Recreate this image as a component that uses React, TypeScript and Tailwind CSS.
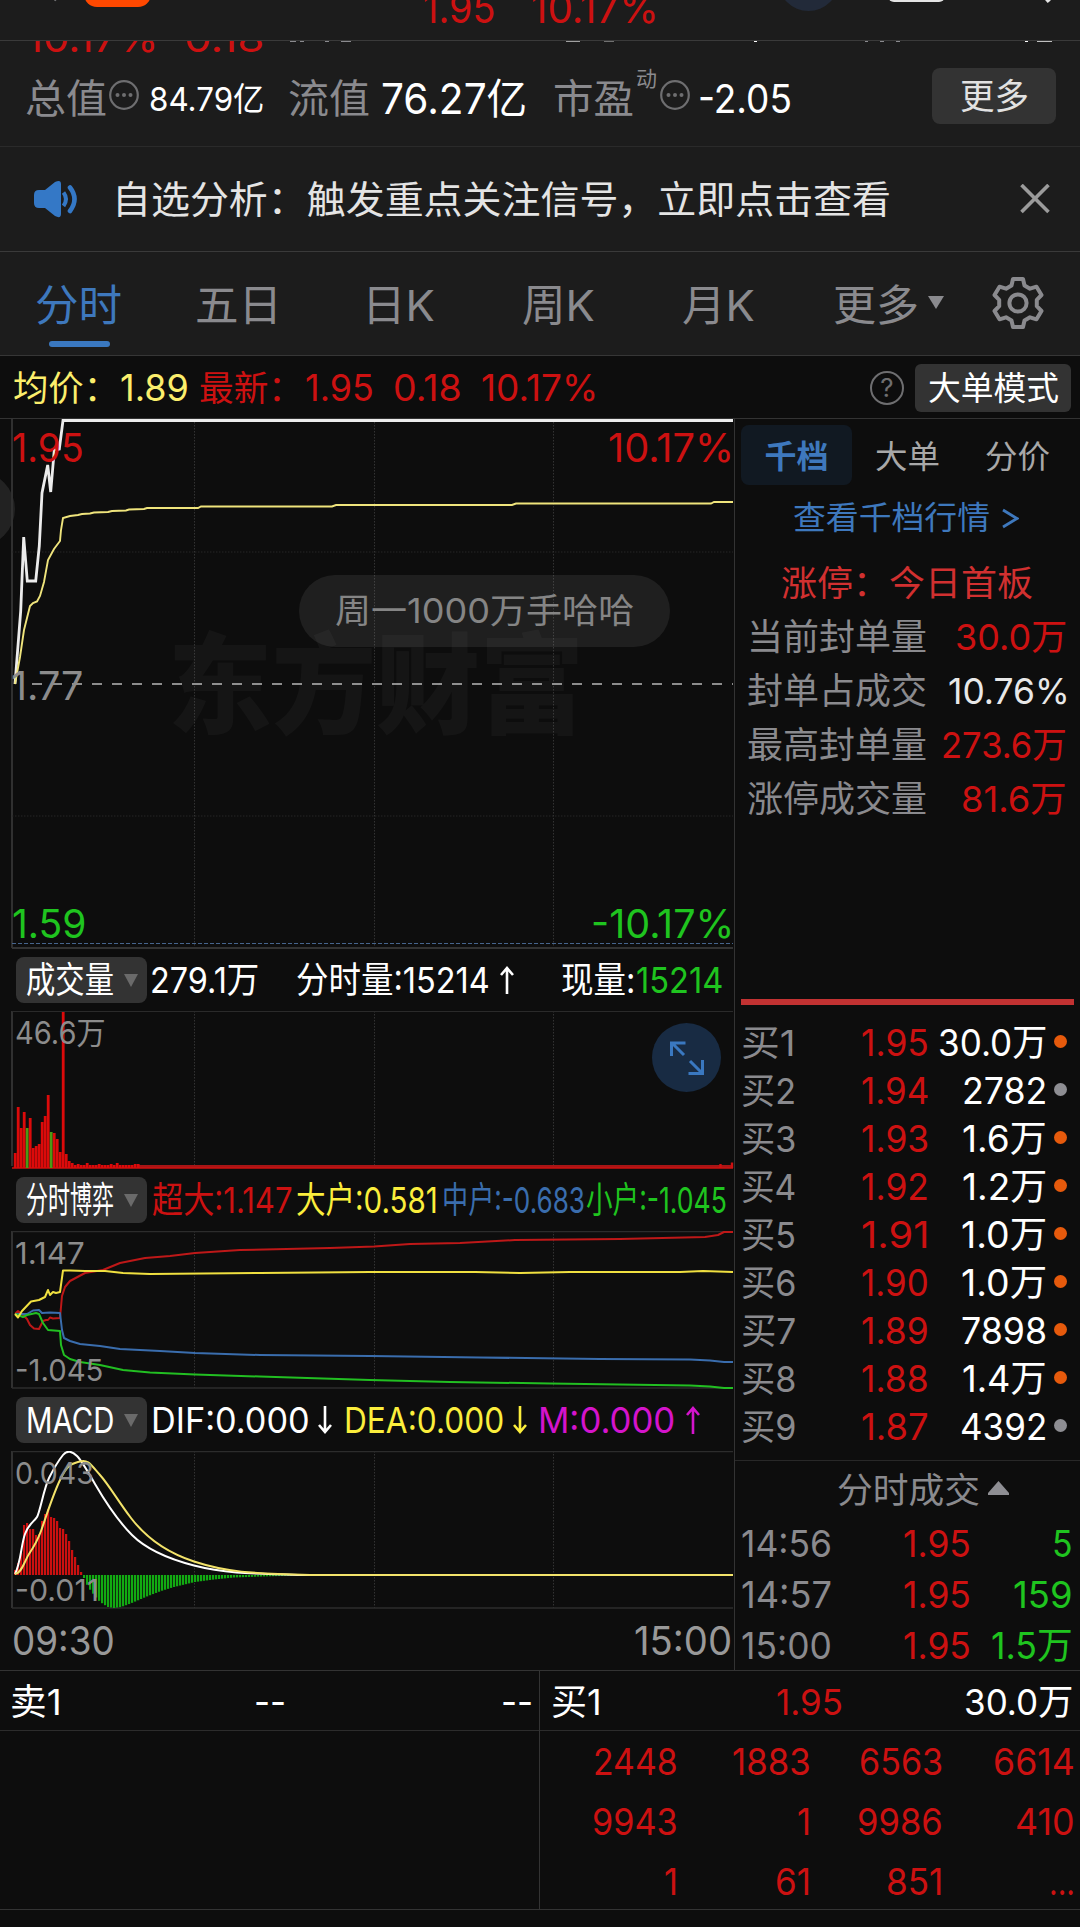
import { useLayoutEffect, useRef, type ReactNode } from 'react';
import clsx from 'clsx';

// Squeezes or stretches one line of text to the width of its box
const Fit = ({ className, children }: { className?: string; children: ReactNode }) => {
  const box = useRef<HTMLSpanElement>(null);
  const text = useRef<HTMLSpanElement>(null);

  useLayoutEffect(() => {
    if (!box.current || !text.current) return;
    const ratio = box.current.clientWidth / text.current.offsetWidth;
    text.current.style.transform = `scaleX(${ratio})`;
  }, [children]);

  return (
    <span ref={box} className={clsx('block shrink-0 whitespace-nowrap', className)}>
      <span ref={text} className="inline-block origin-left whitespace-pre">
        {children}
      </span>
    </span>
  );
};

const InfoDots = () => (
  <svg width="30" height="30" viewBox="0 0 30 30" className="shrink-0" fill="#6e6e70">
    <circle cx="15" cy="15" r="13.8" fill="none" stroke="#6e6e70" strokeWidth="2.2" />
    <circle cx="8.5" cy="15" r="2" />
    <circle cx="15" cy="15" r="2" />
    <circle cx="21.5" cy="15" r="2" />
  </svg>
);

const Header = () => (
  <header className="relative h-[41px] overflow-hidden border-b border-[#3a3a3a]">
    <div className="absolute -top-1 left-[53px] h-[5px] w-[3px] rotate-[-45deg] bg-[#77777a]" />
    <div className="absolute -top-8 left-[84px] h-[39px] w-[67px] rounded-[13px] bg-[#ff4800]" />
    <div className="absolute -top-[17px] left-[423px] flex text-[41px] leading-[50px] text-[#cc1111]">
      <Fit className="w-[73px]">1.95</Fit>
      <Fit className="ml-[35px] w-[128px]">10.17%</Fit>
    </div>
    <div className="absolute -top-[50px] left-[778px] size-[61px] rounded-full bg-[#222a39]" />
    <div className="absolute -top-5 left-[888px] h-[22px] w-[57px] rounded-md bg-[#e4e4e4]" />
    <div className="absolute -top-[7px] left-[1044px] h-[10px] w-[4px] rotate-[-40deg] bg-[#e4e4e4]" />
  </header>
);

const Summary = () => (
  <section className="relative flex h-[106px] items-start overflow-hidden border-b border-[#2a2a2a] pl-[25px] text-white">
    <div className="absolute -top-[28px] left-[26px] flex text-[39px] leading-[50px] text-[#cc1111]">
      <Fit className="w-[133px]">10.17%</Fit>
      <Fit className="ml-[25px] w-[80px]">0.18</Fit>
    </div>
    <div className="absolute left-[290px] top-0 flex h-px">
      <i className="w-[6px] bg-[#8a8a8e]" />
      <i className="ml-1 w-[4px] bg-[#8a8a8e]" />
      <i className="ml-[21px] w-[4px] bg-[#8a8a8e]" />
      <i className="ml-[12px] w-[10px] bg-[#8a8a8e]" />
      <i className="ml-[215px] w-[14px] bg-[#a0a0a0]" />
      <i className="ml-[24px] w-[10px] bg-[#707070]" />
      <i className="ml-[140px] w-[3px] bg-white" />
      <i className="ml-[108px] w-[3px] bg-[#8a8a8e]" />
      <i className="ml-[12px] w-[4px] bg-[#8a8a8e]" />
      <i className="ml-[12px] w-[4px] bg-[#8a8a8e]" />
      <i className="ml-[125px] w-[3px] bg-white" />
      <i className="ml-[9px] w-[15px] bg-[#c0c0c0]" />
    </div>
    <Fit className="mt-[33px] w-[82px] text-[40px] leading-[50px] text-[#8a8a8e]">总值</Fit>
    <div className="ml-[2px] mt-[39px]">
      <InfoDots />
    </div>
    <Fit className="ml-[10px] mt-[33px] w-[115px] text-[33px] leading-[50px]">84.79亿</Fit>
    <Fit className="ml-[24px] mt-[33px] w-[82px] text-[40px] leading-[50px] text-[#8a8a8e]">流值</Fit>
    <Fit className="ml-[11px] mt-[33px] w-[146px] text-[42px] leading-[50px]">76.27亿</Fit>
    <Fit className="ml-[26px] mt-[33px] w-[81px] text-[40px] leading-[50px] text-[#8a8a8e]">市盈</Fit>
    <Fit className="ml-[2px] mt-[25px] w-[21px] text-[21px] leading-[26px] text-[#8a8a8e]">动</Fit>
    <div className="ml-[3px] mt-[39px]">
      <InfoDots />
    </div>
    <Fit className="ml-[8px] mt-[33px] w-[94px] text-[39px] leading-[50px]">-2.05</Fit>
    <button className="ml-[140px] mt-[27px] flex h-[56px] w-[124px] items-center justify-center rounded-lg bg-[#333333] text-[#e2e2e2]">
      <Fit className="w-[69px] text-[35px] leading-[50px]">更多</Fit>
    </button>
  </section>
);

const Notice = () => (
  <section className="flex h-[105px] items-center border-b border-[#3a3a3a] pl-[34px] text-[#e4e4e4]">
    <svg width="45" height="38" viewBox="0 0 45 38" fill="#3478c6">
      <path d="M0 15 Q0 10 5 10 H11 L21 2 Q27 -1 27 4 V34 Q27 39 21 36 L11 28 H5 Q0 28 0 23 Z" />
      <path d="M29.5 12.5 Q34.5 19 29.5 26" fill="none" stroke="#3478c6" strokeWidth="4" />
      <path d="M36 7.5 Q45 19 36 31" fill="none" stroke="#3478c6" strokeWidth="4.6" strokeLinecap="round" />
    </svg>
    <Fit className="ml-[33px] w-[779px] text-[38px] leading-[50px]">
      自选分析：触发重点关注信号，立即点击查看
    </Fit>
    <svg width="30" height="30" viewBox="0 0 30 30" className="ml-[129px]" stroke="#9b9b9b" strokeWidth="3.6">
      <path d="M1.5 1 L28.5 28 M28.5 1 L1.5 28" />
    </svg>
  </section>
);

const Gear = () => (
  <svg width="52" height="54" viewBox="0 0 52 54" fill="none" stroke="#8a8a8e" strokeWidth="4" strokeLinejoin="round">
    <path d="M21 3 H31 L32.5 9.5 L38 12.7 L44.5 10.7 L49.5 19 L44.8 23.8 V30.2 L49.5 35 L44.5 43.3 L38 41.3 L32.5 44.5 L31 51 H21 L19.5 44.5 L14 41.3 L7.5 43.3 L2.5 35 L7.2 30.2 V23.8 L2.5 19 L7.5 10.7 L14 12.7 L19.5 9.5 Z" />
    <circle cx="26" cy="27" r="8.6" />
  </svg>
);

const PeriodTabs = () => (
  <nav className="flex h-[104px] items-center border-b border-[#363636] pl-[35px] pt-[2px] text-[43px] leading-[60px] text-[#8a8a8e]">
    <div className="relative text-[#3e78bd]">
      <Fit className="w-[87px]">分时</Fit>
      <div className="absolute -bottom-[12px] left-[14px] h-[6px] w-[61px] rounded-full bg-[#3a78c0]" />
    </div>
    <Fit className="ml-[73px] w-[87px]">五日</Fit>
    <Fit className="ml-[80px] w-[73px]">日K</Fit>
    <Fit className="ml-[87px] w-[73px]">周K</Fit>
    <Fit className="ml-[87px] w-[73px]">月K</Fit>
    <Fit className="ml-[78px] w-[86px]">更多</Fit>
    <svg width="16" height="14" viewBox="0 0 16 14" className="-mt-1 ml-[9px]" fill="#8a8a8e">
      <path d="M0 0 H16 L8 13 Z" />
    </svg>
    <div className="-mt-[3px] ml-[48px]">
      <Gear />
    </div>
  </nav>
);

const PriceBar = () => (
  <section className="flex h-[63px] items-center border-b border-[#333333] pl-[13px] pt-[2px] text-[37px] leading-[50px] text-[#cc1111]">
    <Fit className="w-[106px] text-[35px] text-[#fbee6c]">均价：</Fit>
    <Fit className="ml-[1px] w-[69px] text-[#fbee6c]">1.89</Fit>
    <Fit className="ml-[10px] w-[104px] text-[35px]">最新：</Fit>
    <Fit className="ml-[2px] w-[69px]">1.95</Fit>
    <Fit className="ml-[19px] w-[69px]">0.18</Fit>
    <Fit className="ml-[19px] w-[117px]">10.17%</Fit>
    <div className="ml-[272px] flex size-[34px] items-center justify-center rounded-full border-[2.5px] border-[#6e6e70] text-[26px] leading-none text-[#6e6e70]">
      ?
    </div>
    <button className="ml-[11px] flex h-[48px] w-[156px] items-center justify-center rounded-md bg-[#333333] text-white">
      <Fit className="w-[131px] text-[33px]">大单模式</Fit>
    </button>
  </section>
);

const GridLines = ({ top, bottom }: { top: number; bottom: number }) => (
  <>
    {[194.5, 374.5, 553.5].map((x) => (
      <path key={x} d={`M${x} ${top} V${bottom}`} stroke="#333333" strokeDasharray="1.5 1.5" />
    ))}
    <path d={`M12 ${top} V${bottom}`} stroke="#303030" strokeWidth="2" />
  </>
);

const PRICE =
  '15,684 20.7,611 23.7,537 27.3,581 35.7,581 39.3,546 42,493 47.7,465 50.7,492 54.3,450 59.3,449 63,420.5 733,420.5';
const AVERAGE =
  '15,684 20,657 24,630 30,606 33,603 37,601.5 40,596 44,582 48,560 54,549 60,541 61,530 63,518 70,516 78,515 82,514 90,513.5 94,512.5 108,512 112,511 126,510.5 129,509.5 144,509 147,508 198,508 201,506.5 332,506.5 336,505 512,505 516,503.5 711,503.5 714,502 733,502';

const PriceChart = () => (
  <div className="relative h-[530px] overflow-hidden">
    <svg width="735" height="530" viewBox="0 419 735 530" className="block" fill="none">
      <circle cx="-22.5" cy="509" r="37.5" fill="#222222" />
      <GridLines top={419} bottom={948} />
      <path d="M12 552 H733 M12 816 H733" stroke="#272727" strokeDasharray="1.5 1.5" />
      <path d="M32 684 H733" stroke="#8c8c8c" strokeWidth="2" strokeDasharray="10 10" />
      <path d="M12 943.5 H733" stroke="#46648c" strokeDasharray="4 2" />
      <path d="M12 948 H733" stroke="#333333" strokeWidth="2" />
      <polyline points={PRICE} stroke="#ececec" strokeWidth="2.8" />
      <polyline points={AVERAGE} stroke="#efe47c" strokeWidth="1.9" />
    </svg>
    <div className="absolute left-[168px] top-[198px] text-[109px] font-black leading-[136px] text-white/[0.035]">
      <Fit className="w-[416px]">东方财富</Fit>
    </div>
    <div className="absolute left-[299px] top-[156px] flex h-[72px] w-[371px] items-center justify-center rounded-full bg-white/[0.075] text-[#858585]">
      <Fit className="w-[299px] text-[34px] leading-[50px]">周一1000万手哈哈</Fit>
    </div>
    <div className="text-[39.5px] leading-[50px]">
      <Fit className="absolute left-[12px] top-[4px] w-[72px] text-[#cc1111]">1.95</Fit>
      <Fit className="absolute left-[608px] top-[4px] w-[126px] text-[#cc1111]">10.17%</Fit>
      <Fit className="absolute left-[11px] top-[242px] w-[72px] text-[#8c8c8c]">1.77</Fit>
      <Fit className="absolute left-[12px] top-[480px] w-[74px] text-[#1fc41f]">1.59</Fit>
      <Fit className="absolute left-[591px] top-[480px] w-[143px] text-[#1fc41f]">-10.17%</Fit>
    </div>
  </div>
);

const IndicatorButton = ({ label }: { label: string }) => (
  <button className="flex h-[46px] w-[131px] shrink-0 items-center rounded-lg bg-[#333333] pl-[10px] text-white">
    <Fit className="w-[88px]">{label}</Fit>
    <svg width="14" height="13" viewBox="0 0 14 13" className="ml-[10px]" fill="#6a6a6a">
      <path d="M0 0 H14 L7 13 Z" />
    </svg>
  </button>
);

const IndicatorRow = ({ label, children }: { label: string; children: ReactNode }) => (
  <div className="flex h-[62px] items-center pl-[16px] text-[36px] leading-[46px] text-white">
    <IndicatorButton label={label} />
    {children}
  </div>
);

const Arrow = ({ up, className }: { up?: boolean; className?: string }) => (
  <svg width="16" height="28" viewBox="0 0 16 28" className={className} fill="none" stroke="currentColor" strokeWidth="2.6">
    <path d={up ? 'M8 28 V2 M2 9 L8 2 L14 9' : 'M8 0 V26 M2 19 L8 26 L14 19'} />
  </svg>
);

const VOLUME = [15, 61, 40, 56, 40, 50, 20, 22, 24, 46, 52, 73, 36, 35, 29, 16, 156, 14, 7, 5, 3, 4, 3, 3, 5, 3, 3, 3, 4, 3, 3, 3, 4, 3, 5, 3, 3, 3, 3, 3, 4, 4];
const VOLUME_DOWN = [4, 12];

const VolumeChart = () => (
  <div className="relative h-[158px]">
    <svg width="735" height="158" viewBox="0 1011 735 158" className="block" fill="none">
      <GridLines top={1011} bottom={1166} />
      <path d="M12 1011.5 H733" stroke="#2a2a2a" />
      <path d="M139 1166.5 H733" stroke="#a81515" strokeWidth="3" />
      <path d="M12 1168 H733" stroke="#cc1111" strokeWidth="1.5" />
      {VOLUME.map((v, i) => (
        <rect
          key={i}
          x={13.8 + i * 3}
          y={1168 - v}
          width="2.8"
          height={v}
          fill={VOLUME_DOWN.includes(i) ? '#4c9a14' : '#dc0a0a'}
        />
      ))}
      <path d="M720.5 1164 V1168 M732 1162.5 V1168" stroke="#cc1111" strokeWidth="2.4" />
    </svg>
    <Fit className="absolute left-[15px] top-0 w-[91px] text-[31px] leading-[44px] text-[#8c8c8c]">46.6万</Fit>
    <div className="absolute left-[652px] top-[12px] flex size-[69px] items-center justify-center rounded-full bg-[#182b43]">
      <svg width="34" height="34" viewBox="0 0 34 34" fill="none" stroke="#3a78c0" strokeWidth="3">
        <path d="M1.5 15 V2 H15.5 M2 2 L14 14" />
        <path d="M32.5 19 V32.5 H18.5 M32 32 L20 20" />
      </svg>
    </div>
  </div>
);

const GAME_LINES = [
  {
    color: '#be1818',
    points:
      '15,1314 18,1311 22,1314 27,1319 30,1325 34,1328.5 39,1329 43,1321 46,1320 48,1320 50,1317.5 53,1318.5 60,1318 62,1296 65,1287 70,1281 85,1273 103,1270 120,1263 145,1258 170,1256 195,1253 240,1250 330,1248 374,1246.5 410,1244 460,1243 515,1240 620,1239 705,1237 718,1235 724,1232 733,1232',
  },
  {
    color: '#3a6dad',
    points:
      '15,1314 27,1314 33,1310.5 39,1310 42,1313 50,1312.5 60,1313 62,1330 64,1338 70,1341 80,1344 100,1346 120,1349 160,1351 195,1353 260,1355 370,1356 480,1357.5 600,1359 690,1359.5 710,1360.5 724,1362 733,1362',
  },
  {
    color: '#22bf22',
    points:
      '15,1314 18,1315 23,1317 27,1315 36,1313 39,1314 43,1323 48,1330 60,1331 61,1345 64,1355 70,1359 80,1362 100,1365 123,1370 150,1372.5 195,1374.5 260,1376.5 370,1380 450,1382 550,1383.5 690,1385.5 710,1386.5 724,1388 733,1388',
  },
  {
    color: '#f0e040',
    points:
      '15,1314 18,1317.5 22,1311 31,1301.5 39,1300 45,1297 48,1290 50,1295 53,1292 56,1293 60,1292 63,1270.5 70,1270.5 85,1271 105,1271 123,1273 150,1274 260,1273 370,1272 475,1272 520,1273 570,1272 680,1272 703,1271 733,1272',
  },
];

const GameChart = () => (
  <div className="relative h-[158px]">
    <svg width="735" height="158" viewBox="0 1231 735 158" className="block" fill="none">
      <GridLines top={1231} bottom={1388} />
      <path d="M12 1231.5 H733 M12 1388 H733" stroke="#2c2c2c" strokeWidth="1.5" />
      {GAME_LINES.map((line) => (
        <polyline key={line.color} points={line.points} stroke={line.color} strokeWidth="2" strokeLinejoin="round" />
      ))}
    </svg>
    <div className="text-[30px] leading-[40px] text-[#8c8c8c]">
      <Fit className="absolute left-[15px] top-[2px] w-[70px]">1.147</Fit>
      <Fit className="absolute left-[15px] top-[119px] w-[88px]">-1.045</Fit>
    </div>
  </div>
);

const MACD_UP = [5, 12, 22, 50, 52, 46, 46, 40, 41, 54, 61, 66, 58, 57, 54, 47, 46, 41, 34, 25, 18, 10, 3];
// x / depth pairs of the lower histogram's outline
const MACD_DOWN = [
  [83, 3], [87, 12], [93, 20], [97, 25], [102, 29], [107, 32], [113, 33], [120, 32], [127, 29.5], [133, 27],
  [147, 21], [160, 16], [173, 12], [194, 7], [213, 4.5], [233, 2.5], [260, 1.5], [300, 0.5],
];

const depthAt = (x: number) => {
  const k = MACD_DOWN.findIndex(([px]) => px >= x);
  if (k < 1) return MACD_DOWN[0][1];
  const [x0, y0] = MACD_DOWN[k - 1];
  const [x1, y1] = MACD_DOWN[k];
  return y0 + ((y1 - y0) * (x - x0)) / (x1 - x0);
};

const MacdChart = () => (
  <div className="relative h-[158px]">
    <svg width="735" height="158" viewBox="0 1451 735 158" className="block" fill="none">
      <GridLines top={1451} bottom={1608} />
      <path d="M12 1451.5 H733 M12 1608 H733" stroke="#2c2c2c" strokeWidth="1.5" />
      {MACD_UP.map((v, i) => (
        <rect key={i} x={14 + i * 3} y={1575 - v} width="2.2" height={v} fill="#cc1010" />
      ))}
      {Array.from({ length: 70 }, (_, i) => 83 + i * 3).map((x) => (
        <rect key={x} x={x} y="1575" width="2.2" height={depthAt(x)} fill="#12aa12" />
      ))}
      <path
        d="M15 1574 C21 1562 21 1545 25 1534 S34 1522 37 1517 S44 1488 49 1478 S59 1460 63 1455 S72 1451 77 1456 S88 1472 95 1484 S118 1521 132 1535 S165 1558 194 1565.5 S245 1573.5 300 1575 H733"
        stroke="#ffffff"
        strokeWidth="2"
      />
      <path
        d="M15 1574 C22 1573 25 1560 29 1554 S37 1542 41 1531 S52 1497 60 1480 S72 1464 80 1461.5 S91 1465 100 1475 S118 1501 131 1518 S162 1551 194 1561.5 S250 1573.5 310 1575 H733"
        stroke="#f3e36a"
        strokeWidth="2"
      />
    </svg>
    <div className="text-[30px] leading-[40px] text-[#8c8c8c]">
      <Fit className="absolute left-[15px] top-[2px] w-[79px]">0.043</Fit>
      <Fit className="absolute left-[15px] top-[119px] w-[84px]">-0.011</Fit>
    </div>
  </div>
);

const Charts = () => (
  <div className="w-[735px] shrink-0 border-r border-[#333333]">
    <PriceChart />
    <IndicatorRow label="成交量">
      <Fit className="ml-[3px] w-[109px]">279.1万</Fit>
      <Fit className="ml-[37px] w-[194px]">分时量:15214</Fit>
      <Arrow up className="ml-[9px]" />
      <Fit className="ml-[46px] w-[74px]">现量:</Fit>
      <Fit className="ml-px w-[87px] text-[#1fc41f]">15214</Fit>
    </IndicatorRow>
    <VolumeChart />
    <IndicatorRow label="分时博弈">
      <Fit className="ml-[5px] w-[141px] text-[#cc1111]">超大:1.147</Fit>
      <Fit className="ml-[3px] w-[142px] text-[#fbee3c]">大户:0.581</Fit>
      <Fit className="ml-[4px] w-[143px] text-[#3a6dad]">中户:-0.683</Fit>
      <Fit className="ml-px w-[141px] text-[#1fc41f]">小户:-1.045</Fit>
    </IndicatorRow>
    <GameChart />
    <IndicatorRow label="MACD">
      <Fit className="ml-[4px] w-[159px]">DIF:0.000</Fit>
      <Arrow className="ml-[7px]" />
      <Fit className="ml-[11px] w-[160px] text-[#fbee3c]">DEA:0.000</Fit>
      <Arrow className="ml-[8px] text-[#fbee3c]" />
      <Fit className="ml-[10px] w-[137px] text-[#d414cc]">M:0.000</Fit>
      <Arrow up className="ml-[10px] text-[#d414cc]" />
    </IndicatorRow>
    <MacdChart />
    <div className="flex justify-between pl-[12px] pr-[2px] pt-[7px] text-[39px] leading-[50px] text-[#999999]">
      <Fit className="w-[103px]">09:30</Fit>
      <Fit className="w-[98px]">15:00</Fit>
    </div>
  </div>
);

const BOARD = [
  { label: '当前封单量', value: '30.0万', width: 'w-[112px]', color: 'text-[#cc1111]' },
  { label: '封单占成交', value: '10.76%', width: 'w-[122px] -mr-[3px]', color: 'text-[#e8e8e8]' },
  { label: '最高封单量', value: '273.6万', width: 'w-[126px]', color: 'text-[#cc1111]' },
  { label: '涨停成交量', value: '81.6万', width: 'w-[106px]', color: 'text-[#cc1111]' },
];

const BIDS = [
  { price: '1.95', volume: '30.0万', width: 'w-[109px]', big: true },
  { price: '1.94', volume: '2782', width: 'w-[85px]', big: false },
  { price: '1.93', volume: '1.6万', width: 'w-[85px]', big: true },
  { price: '1.92', volume: '1.2万', width: 'w-[85px]', big: true },
  { price: '1.91', volume: '1.0万', width: 'w-[86px]', big: true },
  { price: '1.90', volume: '1.0万', width: 'w-[86px]', big: true },
  { price: '1.89', volume: '7898', width: 'w-[86px]', big: true },
  { price: '1.88', volume: '1.4万', width: 'w-[85px]', big: true },
  { price: '1.87', volume: '4392', width: 'w-[87px]', big: false },
];

const TRADES = [
  { time: '14:56', price: '1.95', volume: '5', width: 'w-[21px]' },
  { time: '14:57', price: '1.95', volume: '159', width: 'w-[60px]' },
  { time: '15:00', price: '1.95', volume: '1.5万', width: 'w-[82px]' },
];

const OrderBook = () => (
  <aside className="w-[345px] text-[36px] leading-[48px] text-[#8a8a8e]">
    <div className="ml-[6px] flex h-[66px] items-center pt-[6px] text-[32px] text-[#a8a8a8]">
      <div className="flex h-[60px] w-[111px] items-center justify-center rounded-lg bg-[#111922] pt-[3px] font-bold text-[#3e78bd]">
        <Fit className="w-[64px]">千档</Fit>
      </div>
      <Fit className="ml-[23px] mt-[3px] w-[65px]">大单</Fit>
      <Fit className="ml-[45px] mt-[3px] w-[65px]">分价</Fit>
    </div>
    <div className="ml-[58px] flex pt-[9px] text-[32px] text-[#3e78bd]">
      <Fit className="w-[197px]">查看千档行情</Fit>
      <svg width="17" height="22" viewBox="0 0 17 22" className="ml-[12px] mt-[14px]" fill="none" stroke="#3e78bd" strokeWidth="2.8">
        <path d="M1 2 L15 10.5 L1 19" />
      </svg>
    </div>
    <div className="pl-[46px] pt-[17px]">
      <Fit className="w-[252px] text-[35px] text-[#d13030]">涨停：今日首板</Fit>
    </div>
    <div className="h-[392px] pt-[3px]">
      {BOARD.map((row) => (
        <div key={row.label} className="flex h-[54px] items-center justify-between pl-[12px] pr-[13px]">
          <Fit className="w-[180px]">{row.label}</Fit>
          <Fit className={clsx(row.width, row.color)}>{row.value}</Fit>
        </div>
      ))}
    </div>
    <div className="ml-[6px] h-[6px] w-[333px] bg-[#c23232]" />
    <div className="h-[455px] pt-[14px] text-[37px]">
      {BIDS.map((bid, i) => (
        <div key={bid.price} className="flex h-[48px] items-center pl-[6px]">
          <Fit className="w-[55px] text-[36px]">{`买${i + 1}`}</Fit>
          <Fit className="ml-[65px] w-[68px] text-[#cc1111]">{bid.price}</Fit>
          <div className="flex w-[118px] justify-end text-white">
            <Fit className={bid.width}>{bid.volume}</Fit>
          </div>
          <i className={clsx('-mt-1 ml-[7px] size-[13px] rounded-full', bid.big ? 'bg-[#e65a0c]' : 'bg-[#8e8e93]')} />
        </div>
      ))}
    </div>
    <div className="flex h-[58px] items-center border-t border-[#282828] pl-[102px]">
      <Fit className="w-[143px] text-[35px]">分时成交</Fit>
      <svg width="21" height="14" viewBox="0 0 21 14" className="-mt-1 ml-[8px]" fill="#8e8e93">
        <path d="M10.5 0 L21 12 V14 H0 V12 Z" />
      </svg>
    </div>
    {TRADES.map((trade) => (
      <div key={trade.time} className="flex h-[51px] items-center justify-between pl-[6px] pr-[7px] text-[37px]">
        <Fit className="w-[91px]">{trade.time}</Fit>
        <div className="flex w-[170px] items-center">
          <Fit className="w-[68px] text-[#cc1111]">{trade.price}</Fit>
          <div className="flex grow justify-end text-[#1fc41f]">
            <Fit className={trade.width}>{trade.volume}</Fit>
          </div>
        </div>
      </div>
    ))}
  </aside>
);

const QUEUE = [
  ['2448', 'w-[85px]'], ['1883', 'w-[79px]'], ['6563', 'w-[84px]'], ['6614', 'w-[82px]'],
  ['9943', 'w-[86px]'], ['1', 'w-[14px]'], ['9986', 'w-[86px]'], ['410', 'w-[60px]'],
  ['1', 'w-[14px]'], ['61', 'w-[36px]'], ['851', 'w-[57px]'], ['...', 'w-[26px]'],
];

const Depth = () => (
  <section className="flex h-[240px] border-y border-[#333333] text-[36px] leading-[48px]">
    <div className="w-[540px] border-r border-[#333333]">
      <div className="flex h-[60px] items-center border-b border-[#2c2c2c] pl-[10px] pt-[2px] text-white">
        <Fit className="w-[52px]">卖1</Fit>
        <Fit className="ml-[192px] w-[32px]">--</Fit>
        <Fit className="ml-[215px] w-[32px]">--</Fit>
      </div>
    </div>
    <div className="w-[540px]">
      <div className="flex h-[60px] items-center border-b border-[#2c2c2c] pl-[11px] pt-[2px] text-white">
        <Fit className="w-[51px]">买1</Fit>
        <Fit className="ml-[174px] w-[67px] text-[#cc1111]">1.95</Fit>
        <Fit className="ml-[121px] w-[109px]">30.0万</Fit>
      </div>
      <div className="grid grid-cols-4 pl-[6px] pr-[5px] pt-px text-[37px] text-[#cc1111]">
        {QUEUE.map(([value, width], i) => (
          <div key={i} className="flex h-[60px] items-center justify-end">
            <Fit className={width}>{value}</Fit>
          </div>
        ))}
      </div>
    </div>
  </section>
);

export default function App() {
  return (
    <main className="h-[1927px] w-[1080px] overflow-hidden bg-[#0d0d0d] font-['Inter','Noto_Sans_CJK_SC',sans-serif]">
      <div className="bg-[#1c1c1c]">
        <Header />
        <Summary />
        <Notice />
        <PeriodTabs />
      </div>
      <PriceBar />
      <div className="flex h-[1251px]">
        <Charts />
        <OrderBook />
      </div>
      <Depth />
    </main>
  );
}
